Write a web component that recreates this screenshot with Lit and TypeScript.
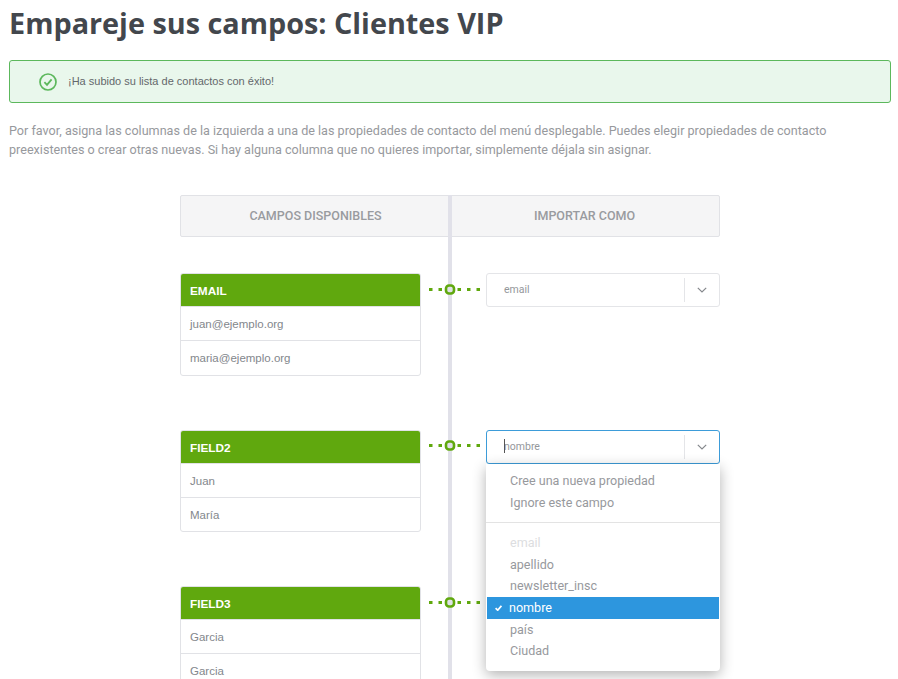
import { LitElement, html, css } from "lit";
import { customElement } from "lit/decorators.js";

const chevron = html`<svg class="chev" width="10" height="6" viewBox="0 0 10 6"><path d="M.8 .8 L5 5 L9.2 .8" fill="none" stroke="#85888c" stroke-width="1.2"/></svg>`;

@customElement("app-root")
export class AppRoot extends LitElement {
  static styles = css`
    :host { display: block; height: 679px; overflow: hidden; background: #fff; font-family: "Roboto", sans-serif; }
    .page { padding: 0 7px 0 9px; }
    h1 { margin: 0; padding-top: 5px; height: 60px; box-sizing: border-box; font: 700 28.8px/36px "Open Sans", sans-serif; color: #43474d; }
    .alert { height: 43px; box-sizing: border-box; border: 1px solid #5cb85c; border-radius: 3px; background: #e9f7ec; display: flex; align-items: center; padding-left: 29px; gap: 11px; font: 11px "Liberation Sans", sans-serif; color: #63676b; }
    .alert span { padding-bottom: 2px; }
    .alert svg { display: block; }
    p { margin: 18px 0 0; font-size: 12.6px; line-height: 19px; color: #97999d; height: 34px; }
    .mapper { width: 540px; margin: 40px auto 0; position: relative; }
    .spine { position: absolute; left: 268px; width: 4px; top: 0; height: 600px; background: #e1e1e9; }
    .head { display: grid; grid-template-columns: 1fr 1fr; height: 42px; box-sizing: border-box; border: 1px solid #e1e2e6; border-radius: 2px; background: #f5f5f6; font-size: 12.5px; font-weight: 500; color: #999b9f; text-align: center; line-height: 40px; }
    .row { position: relative; display: grid; grid-template-columns: 241px 65px 234px; align-items: start; margin-top: 54px; height: 102.5px; }
    .spine + .row { margin-top: 36px; }
    .card { border: 1px solid #e1e2e6; border-radius: 3px; box-sizing: border-box; background: #fff; font: 11.5px "Liberation Sans", sans-serif; color: #83878c; overflow: hidden; }
    .card .title { background: #60a80e; color: #fff; font-weight: 700; font-size: 11.8px; height: 32px; line-height: 34px; padding-left: 9px; }
    .card .item { height: 34.4px; line-height: 34px; padding-left: 9px; border-top: 1px solid #e1e2e6; box-sizing: border-box; }
    .link { position: relative; height: 32px; display: block; }
    .link svg { position: absolute; left: 8px; top: 9.8px; }
    .select { position: relative; height: 34px; box-sizing: border-box; border: 1px solid #e4e5e8; border-radius: 3px; background: #fff; display: flex; align-items: center; font-size: 10.5px; color: #94979b; }
    .select.open { border-color: #3d9cd9; }
    .select .val { flex: 1; padding-left: 17px; padding-bottom: 1px; position: relative; }
    .caret { position: absolute; left: 17px; top: -1px; width: 1px; height: 14px; background: #555; }
    .select .btn { width: 35px; height: 24px; box-sizing: border-box; border-left: 1px solid #e4e5e8; display: flex; align-items: center; justify-content: center; }
    .chev { display: block; }
    .menu { position: absolute; left: 306px; top: 34px; width: 234px; height: 207px; box-sizing: border-box; background: #fff; border-radius: 0 0 4px 4px; box-shadow: 0 4px 14px rgba(0,0,0,.3); font-size: 12.55px; color: #97999d; padding-top: 6px; z-index: 2; }
    .opt { height: 21.7px; line-height: 21.7px; padding-left: 24px; position: relative; }
    .opt.second { height: 22.2px; line-height: 24px; }
    .opt.dis { color: #dcdde0; }
    .opt.sel { background: #2d96de; color: #fff; margin: 0 1px; padding-left: 22px; }
    .opt.sel svg { position: absolute; left: 8px; top: 8px; }
    hr { border: 0; border-top: 1px solid #e3e3e3; margin: 8.5px 0 9px; }
  `;

  private link() {
    return html`<div class="link"><svg width="52" height="13" viewBox="0 0 52 13">
      <path d="M0 6.5H52" stroke="#60a80e" stroke-width="3" stroke-dasharray="3.5 6" fill="none"/>
      <rect x="17" y="2.5" width="8" height="8" rx="3" fill="#e1e1e9" stroke="#60a80e" stroke-width="2.6"/>
    </svg></div>`;
  }

  private card(title: string, a: string, b: string) {
    return html`<div class="card"><div class="title">${title}</div><div class="item">${a}</div><div class="item">${b}</div></div>`;
  }

  render() {
    return html`<div class="page">
      <h1>Empareje sus campos: Clientes VIP</h1>
      <div class="alert">
        <svg width="18" height="18" viewBox="0 0 18 18"><circle cx="9" cy="9" r="8" fill="none" stroke="#5cb85c" stroke-width="1.7"/><path d="M5.4 9.2 L8 11.8 L12.6 6.4" fill="none" stroke="#5cb85c" stroke-width="1.8"/></svg>
        <span>¡Ha subido su lista de contactos con éxito!</span>
      </div>
      <p>Por favor, asigna las columnas de la izquierda a una de las propiedades de contacto del menú desplegable. Puedes elegir propiedades de contacto preexistentes o crear otras nuevas. Si hay alguna columna que no quieres importar, simplemente déjala sin asignar.</p>
      <div class="mapper">
        <div class="head"><div>CAMPOS DISPONIBLES</div><div>IMPORTAR COMO</div></div>
        <div class="spine"></div>
        <div class="row">
          ${this.card("EMAIL", "juan@ejemplo.org", "maria@ejemplo.org")}
          ${this.link()}
          <div class="select"><div class="val">email</div><div class="btn">${chevron}</div></div>
        </div>
        <div class="row">
          ${this.card("FIELD2", "Juan", "María")}
          ${this.link()}
          <div class="select open"><div class="val"><span class="caret"></span>nombre</div><div class="btn">${chevron}</div></div>
          <div class="menu">
            <div class="opt">Cree una nueva propiedad</div>
            <div class="opt second">Ignore este campo</div>
            <hr />
            <div class="opt dis">email</div>
            <div class="opt">apellido</div>
            <div class="opt">newsletter_insc</div>
            <div class="opt sel"><svg width="7" height="6" viewBox="0 0 7 6"><path d="M.6 3.2 L2.7 5.2 L6.4 .8" fill="none" stroke="#fff" stroke-width="1.7"/></svg>nombre</div>
            <div class="opt">país</div>
            <div class="opt">Ciudad</div>
          </div>
        </div>
        <div class="row">
          ${this.card("FIELD3", "Garcia", "Garcia")}
          ${this.link()}
          <div></div>
        </div>
      </div>
    </div>`;
  }
}
